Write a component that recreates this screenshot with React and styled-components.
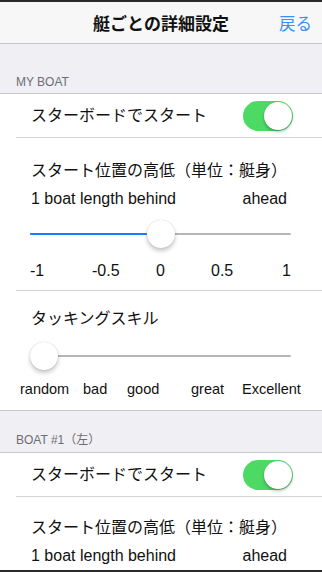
import React from "react";
import styled, { createGlobalStyle } from "styled-components";

const GlobalStyle = createGlobalStyle`
  html, body {
    margin: 0;
    padding: 0;
    background: #efeff4;
  }
  body {
    font-family: "Liberation Sans", "Noto Sans CJK JP", sans-serif;
    -webkit-font-smoothing: antialiased;
  }
`;

const Screen = styled.div`
  width: 322px;
  height: 572px;
  box-sizing: border-box;
  border-top: 2px solid #2a2a2a;
  border-bottom: 2px solid #2a2a2a;
  background: #efeff4;
  overflow: hidden;
  display: flex;
  flex-direction: column;
`;

const NavBar = styled.div`
  flex: none;
  height: 41px;
  background: #f7f7f8;
  border-bottom: 1px solid #c4c4c8;
  display: flex;
  align-items: center;
  justify-content: center;
  position: relative;
`;

const NavTitle = styled.div`
  font-size: 17px;
  font-weight: bold;
  color: #111;
`;

const BackButton = styled.div`
  position: absolute;
  right: 10px;
  top: 0;
  bottom: 0;
  display: flex;
  align-items: center;
  font-size: 16.5px;
  color: #3b8ff5;
`;

const SectionHeader = styled.div`
  flex: none;
  height: ${({ h }) => h}px;
  box-sizing: border-box;
  display: flex;
  align-items: flex-end;
  padding: 0 0 ${({ pb }) => pb}px 16px;
  font-size: 12px;
  line-height: 16px;
  color: #6d6d72;
  border-bottom: 1px solid #c8c7cc;
`;

const Group = styled.div`
  flex: none;
  background: #fff;
  border-bottom: 1px solid #c8c7cc;
`;

const ToggleRow = styled.div`
  height: 43px;
  display: flex;
  align-items: center;
  justify-content: space-between;
  padding: 0 29px 0 31px;
`;

const Label = styled.div`
  font-size: 16px;
  line-height: 20px;
  color: #111;
`;

const Separator = styled.div`
  height: 1px;
  margin-left: 16px;
  background: #d4d4d8;
`;

const Toggle = styled.div`
  width: 50px;
  height: 30px;
  border-radius: 15px;
  background: #4cd964;
  display: flex;
  align-items: center;
  justify-content: flex-end;
  padding: 0 1px;
  box-sizing: border-box;
`;

const Knob = styled.div`
  width: 28px;
  height: 28px;
  border-radius: 50%;
  background: #fff;
  box-shadow: 0 2px 3px rgba(0, 0, 0, 0.25), 0 0 1px rgba(0, 0, 0, 0.2);
`;

const SliderBlock = styled.div`
  padding: ${({ pt }) => pt}px 0 ${({ pb }) => pb}px 0;
  display: flex;
  flex-direction: column;
`;

const Title = styled(Label)`
  padding-left: 31px;
`;

const EndLabels = styled.div`
  display: flex;
  justify-content: space-between;
  padding: 0 35px 0 31px;
  margin-top: 8px;
  font-size: 16px;
  line-height: 20px;
  color: #111;
`;

const SliderTrack = styled.div`
  position: relative;
  width: 261px;
  height: 28px;
  margin: ${({ mt }) => mt}px 0 0 30px;
`;

const TrackLine = styled.div`
  position: absolute;
  left: 0;
  right: 0;
  top: 13px;
  height: 2px;
  background: #b6b6b6;
  border-radius: 1px;
`;

const TrackFill = styled.div`
  position: absolute;
  left: 0;
  top: 13px;
  height: 2px;
  background: #1b7cf4;
  border-radius: 1px;
`;

const Thumb = styled.div`
  position: absolute;
  top: 0;
  width: 28px;
  height: 28px;
  border-radius: 50%;
  background: #fff;
  box-shadow: 0 3px 4px rgba(0, 0, 0, 0.22), 0 0 1px rgba(0, 0, 0, 0.25);
`;

const Scale = styled.div`
  display: grid;
  grid-template-columns: ${({ cols }) => cols};
  padding-left: ${({ pl }) => pl}px;
  margin-top: ${({ mt }) => mt}px;
  font-size: ${({ size }) => size}px;
  line-height: 20px;
  color: #111;
  white-space: nowrap;
`;

function Slider({ value, mt }) {
  const travel = 261 - 28;
  const left = value * travel;
  return (
    <SliderTrack mt={mt}>
      <TrackLine />
      {value > 0 && <TrackFill style={{ width: left }} />}
      <Thumb style={{ left }} />
    </SliderTrack>
  );
}

function StartRow() {
  return (
    <ToggleRow>
      <Label>スターボードでスタート</Label>
      <Toggle>
        <Knob />
      </Toggle>
    </ToggleRow>
  );
}

function PositionBlock({ full }) {
  return (
    <SliderBlock pt={full ? 23 : 21} pb={9}>
      <Title>スタート位置の高低（単位：艇身）</Title>
      <EndLabels>
        <span>1 boat length behind</span>
        <span>ahead</span>
      </EndLabels>
      {full && (
        <>
          <Slider value={0.502} mt={11} />
          <Scale cols="62px 64px 55px 71px auto" pl={30} mt={13} size={16}>
            <span>-1</span>
            <span>-0.5</span>
            <span>0</span>
            <span>0.5</span>
            <span>1</span>
          </Scale>
        </>
      )}
    </SliderBlock>
  );
}

export default function App() {
  return (
    <>
      <GlobalStyle />
      <Screen>
        <NavBar>
          <NavTitle>艇ごとの詳細設定</NavTitle>
          <BackButton>戻る</BackButton>
        </NavBar>

        <SectionHeader h={50} pb={3}>MY BOAT</SectionHeader>
        <Group>
          <StartRow />
          <Separator />
          <PositionBlock full />
          <Separator />
          <SliderBlock pt={18} pb={11}>
            <Title>タッキングスキル</Title>
            <Slider value={0} mt={13} />
            <Scale cols="63px 44px 64px 51px auto" pl={20} mt={9} size={14.5}>
              <span>random</span>
              <span>bad</span>
              <span>good</span>
              <span>great</span>
              <span>Excellent</span>
            </Scale>
          </SliderBlock>
        </Group>

        <SectionHeader h={42} pb={4}>BOAT #1（左）</SectionHeader>
        <Group>
          <StartRow />
          <Separator />
          <PositionBlock />
        </Group>
      </Screen>
    </>
  );
}
